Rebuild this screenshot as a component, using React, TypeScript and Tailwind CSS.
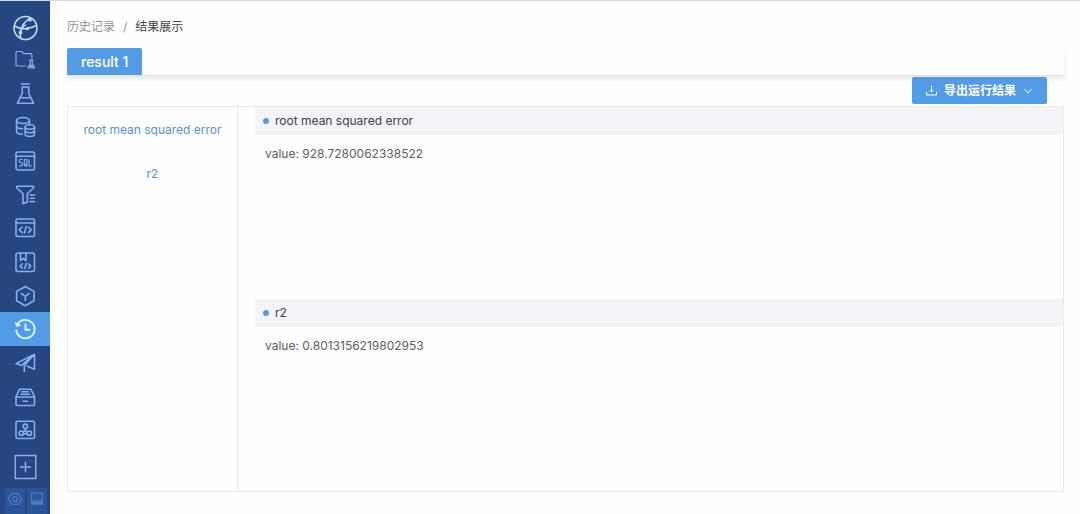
import type { ReactNode } from 'react';

function Icon({ children, size = 'size-6' }: { children: ReactNode; size?: string }) {
  return (
    <svg
      viewBox="0 0 24 24"
      className={size}
      fill="none"
      stroke="currentColor"
      strokeWidth="1.6"
      strokeLinecap="round"
      strokeLinejoin="round"
      aria-hidden="true"
    >
      {children}
    </svg>
  );
}

const navItems: { label: string; icon: ReactNode; active?: boolean }[] = [
  {
    label: '项目',
    icon: (
      <g strokeWidth="1.2">
        <path d="M13 18H4.200a1.200 1.200 0 0 1-1.200-1.200V4.700a1.200 1.200 0 0 1 1.200-1.200h4.500l2 2.200h7a1.200 1.200 0 0 1 1.200 1.200V10" />
        <path d="M16.500 11.800h3.400M17.300 12v3.200L15 19.800h6.600l-2.400-4.600V12" />
        <path d="M17 16.500h2.500l1 2.500h-4.500z" fill="currentColor" stroke="none" />
      </g>
    ),
  },
  {
    label: '实验',
    icon: (
      <>
        <path d="M8.500 2h8M9.300 5h6.400M9.300 5v6.300L4.300 21.300h16.400L15.700 11.300V5" />
        <path d="M8 15.700h9" />
      </>
    ),
  },
  {
    label: '数据',
    icon: (
      <>
        <ellipse cx="10" cy="5.500" rx="6.500" ry="3" />
        <path d="M3.500 5.500v10.800c0 1.600 2.500 2.800 5.800 3M16.500 5.500v3.700M3.500 10.800c0 1.700 2.600 3 6 3" />
        <ellipse cx="16.800" cy="12" rx="4.700" ry="2.200" />
        <path d="M12.100 12v7.300c0 1.200 2 2.200 4.700 2.200s4.700-1 4.700-2.200V12M12.100 15.600c0 1.200 2 2.200 4.700 2.200s4.700-1 4.700-2.200" />
      </>
    ),
  },
  {
    label: 'SQL',
    icon: (
      <>
        <rect x="3" y="3" width="18.500" height="18" rx="2" />
        <path d="M3 7.200h18.500" />
        <path
          strokeWidth="1.200"
          d="M9.200 10.500H7.300a.8.8 0 0 0-.8.8v1.400a.8.8 0 0 0 .8.800h1.100a.8.8 0 0 1 .8.800v1.700a.8.8 0 0 1-.8.800H6.500M11.300 11.300a.8.8 0 0 1 .8-.8h.9a.8.8 0 0 1 .8.8V16a.8.8 0 0 1-.8.8h-.9a.8.8 0 0 1-.8-.8zM12.800 15.600l1.300 1.900M16 10.500v6.300h2.400"
        />
      </>
    ),
  },
  {
    label: '特征',
    icon: (
      <>
        <path d="M3.800 3.300h16.800v1.700l-6.200 5.500v2.500M3.800 3.300v1.700l6.200 5.500v10.200l4.400-2" />
        <path d="M17.300 12h4.200M17.300 15.300h4.200M17.300 18.600h4.200M14.400 12v6.700" />
      </>
    ),
  },
  {
    label: '代码',
    icon: (
      <>
        <rect x="3" y="3" width="18.500" height="17.500" rx="1.500" />
        <path d="M3 7h18.500M9.200 11l-2.900 2.800 2.900 2.800M15.300 11l2.900 2.800-2.900 2.800M13.200 10.700l-1.900 6.200" />
      </>
    ),
  },
  {
    label: '代码库',
    icon: (
      <>
        <rect x="3" y="3" width="18.500" height="18.500" rx="2" />
        <path d="M7.500 3v7.500l2.700-2 2.700 2V3M9.300 13.800L7 16l2.300 2.200M15.500 13.800l2.300 2.200-2.300 2.200M13.300 13.500l-1.600 5" />
      </>
    ),
  },
  {
    label: '模型',
    icon: (
      <>
        <path d="M12.300 2.500l8.700 4.900v9.400l-8.700 4.900-8.700-4.900V7.400z" />
        <path d="M8.500 9.500l3.800 2.800 3.800-2.800M12.300 12.300v4.200" />
      </>
    ),
  },
  {
    label: '历史记录',
    active: true,
    icon: (
      <g strokeWidth="1.900">
        <path d="M4 8.300a9.200 9.200 0 1 1-.7 5.200M12.500 7.500v5.200h4" />
        <path d="M2.600 5.800l1 3.400 3.600-.6z" fill="currentColor" strokeWidth="1" />
      </g>
    ),
  },
  {
    label: '发布',
    icon: <path d="M21.500 3.300L3 12.600l5.500 1.800L21.500 3.300v15l-7.500-3.200M21.500 3.300L11.300 14.500v6" />,
  },
  {
    label: '资源',
    icon: (
      <>
        <path d="M6.500 4.300h11.300L21.500 11.500v7.700a1.300 1.300 0 0 1-1.300 1.300H4.300A1.300 1.300 0 0 1 3 19.200v-7.700zM3 12h18.500M10 16.300h4.500" />
        <path d="M9 6.700h6.500M8 9.300h8.500" />
      </>
    ),
  },
  {
    label: '集群',
    icon: (
      <>
        <rect x="3" y="3.200" width="18.500" height="17.300" rx="1.500" />
        <circle cx="12.300" cy="8.300" r="2.200" />
        <circle cx="8.300" cy="15.200" r="2.200" />
        <circle cx="16.300" cy="15.200" r="2.200" />
        <path d="M12.300 10.500v2.200l-2.100 1.300M12.300 12.700l2.100 1.300M10.500 15.700h3.600" />
      </>
    ),
  },
];

const results = [
  { name: 'root mean squared error', value: '928.7280062338522' },
  { name: 'r2', value: '0.8013156219802953' },
];

function Sidebar() {
  return (
    <aside className="flex w-[50px] shrink-0 flex-col bg-[#25467f] text-[#86aeea]">
      <a href="#home" aria-label="首页" className="flex h-[42px] items-end justify-center pb-0.5 text-[#bcdcfb]">
        <svg viewBox="0 0 26 26" className="size-[26px]" fill="none" stroke="currentColor" strokeWidth="1.600" aria-hidden="true">
          <circle cx="13.500" cy="13" r="11.500" />
          <path d="M2.500 11c5 3 9 3.500 13 2.500s7-2 9-3M19 3c-5 2-9 7-10.500 14-.3 2-.3 3.500 0 6" />
          <path d="M9 14l5-4.500" strokeWidth="1.200" />
          <g fill="currentColor" stroke="none">
            <circle cx="18" cy="4.700" r="1.900" />
            <circle cx="8.500" cy="17.500" r="1.900" />
            <circle cx="15.500" cy="13.500" r="1.700" />
          </g>
        </svg>
      </a>
      <nav aria-label="主导航" className="flex h-[404px] flex-col">
        {navItems.map((item) => (
          <a
            key={item.label}
            href={'#' + item.label}
            aria-label={item.label}
            aria-current={item.active ? 'page' : undefined}
            className={
              item.active
                ? 'flex flex-1 items-center justify-center bg-[#539be5] text-[#dcf3ff]'
                : 'flex flex-1 items-center justify-center'
            }
          >
            <Icon>{item.icon}</Icon>
          </a>
        ))}
      </nav>
      <button type="button" aria-label="新建" className="flex h-10 items-center justify-center">
        <svg viewBox="0 0 24 26" className="h-[26px] w-6" fill="none" stroke="currentColor" strokeWidth="1.500" aria-hidden="true">
          <path d="M2.300 1.500h20.500v23H2.300zM12.500 7.500v11M7 13h11" />
        </svg>
      </button>
      <div className="mt-px flex flex-1 justify-center gap-0.5 pr-[3px] pl-[5px] text-[#4b83cd]">
        <button type="button" aria-label="设置" className="flex flex-1 items-center justify-center bg-[#2b5598] pb-1">
          <Icon size="size-4">
            <path d="M7 4h10l5 8-5 8H7l-5-8z" />
            <circle cx="12" cy="12" r="3.500" />
          </Icon>
        </button>
        <button type="button" aria-label="控制台" className="flex flex-1 items-center justify-center bg-[#2b5598] pb-1">
          <Icon size="size-4">
            <path d="M4 3h16v17H4zM4 14.500h16" />
            <path d="M5 17.500h14" strokeWidth="3" />
          </Icon>
        </button>
      </div>
    </aside>
  );
}

export default function App() {
  return (
    <div className="flex min-h-screen flex-col border-t border-[#d3d7de] bg-[#fefefe] font-['Inter','Noto_Sans_CJK_SC',sans-serif] text-xs text-[#4f5257]">
      <div className="flex flex-1">
        <Sidebar />
        <main className="flex min-w-0 flex-1 flex-col pr-4 pb-[22px] pl-[17px]">
          <nav aria-label="面包屑" className="flex h-[47px] items-center gap-2 pt-1">
            <a href="#history" className="text-[#929292]">历史记录</a>
            <span className="text-[#929292]">/</span>
            <span aria-current="page" className="text-[#444]">结果展示</span>
          </nav>
          <div role="tablist" className="flex h-7 border-b border-[#e2e4e8] shadow-[0_3px_5px_rgba(0,0,0,0.09)]">
            <button
              type="button"
              role="tab"
              aria-selected="true"
              className="rounded-t-xs bg-[#539be5] px-3.5 text-sm font-medium text-white"
            >
              result 1
            </button>
          </div>
          <div className="z-10 flex justify-end pt-px pr-[17px]">
            <button
              type="button"
              className="flex h-[27px] items-center gap-1.5 rounded-xs bg-[#539be5] px-[13px] font-bold text-white"
            >
              <svg viewBox="0 0 13 13" className="size-[13px]" fill="none" stroke="currentColor" aria-hidden="true">
                <path d="M6.500 1.500v6.500M4.500 6l2 2 2-2M1.500 8v3h10V8" />
              </svg>
              <span>导出运行结果</span>
              <svg viewBox="0 0 12 12" className="size-3" fill="none" stroke="currentColor" aria-hidden="true">
                <path d="M2.500 4l3.500 4 3.500-4" />
              </svg>
            </button>
          </div>
          <div className="mt-0.5 flex flex-1 border border-[#e8eaed]">
            <nav aria-label="指标" className="flex w-[170px] shrink-0 flex-col items-center gap-6 border-r border-[#e8eaed] pt-[13px] leading-5 text-[#5792ce]">
              {results.map((result) => (
                <a key={result.name} href={'#' + result.name.replaceAll(' ', '-')}>
                  {result.name}
                </a>
              ))}
            </nav>
            <div className="flex flex-1 flex-col pl-[17px]">
              {results.map((result) => (
                <section key={result.name} id={result.name.replaceAll(' ', '-')} className="flex-1">
                  <h2 className="flex h-7 items-center gap-1.5 bg-[#f3f3f8] px-2 text-[#3e4147]">
                    <span className="size-1.5 rounded-full bg-[#5b96d6]" />
                    {result.name}
                  </h2>
                  <p className="px-2.5 pt-[9px] leading-5 text-[#5c5f64]">value: {result.value}</p>
                </section>
              ))}
            </div>
          </div>
        </main>
      </div>
    </div>
  );
}
